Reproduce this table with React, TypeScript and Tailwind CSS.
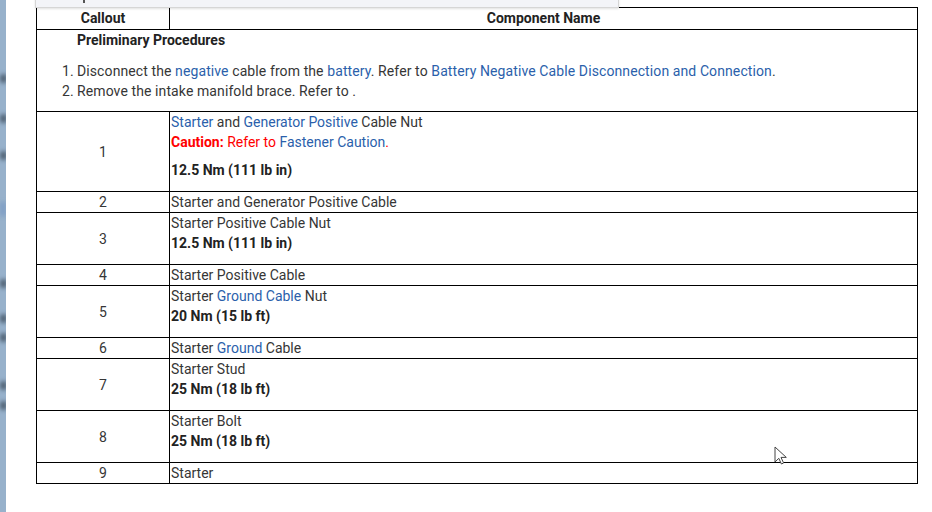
const font = { fontFamily: "Roboto, 'Liberation Sans', sans-serif" }

function Link({ children }: { children: React.ReactNode }) {
  return <span className="text-[#2b5fab]">{children}</span>
}

function Torque({ value }: { value: string }) {
  return <div className="font-bold text-[#222] mb-[11px]">{value}</div>
}

interface Row {
  n: number
  body: React.ReactNode
}

const rows: Row[] = [
  {
    n: 1,
    body: (
      <>
        <div>
          <Link>Starter</Link> and <Link>Generator Positive</Link> Cable Nut
        </div>
        <div className="mb-[8px]">
          <span className="font-bold text-[#ff0000]">Caution:</span>{" "}
          <span className="text-[#ff0000]">Refer to</span> <Link>Fastener Caution</Link>
          <span className="text-[#ff0000]">.</span>
        </div>
        <Torque value="12.5 Nm (111 lb in)" />
      </>
    ),
  },
  { n: 2, body: <div>Starter and Generator Positive Cable</div> },
  {
    n: 3,
    body: (
      <>
        <div>Starter Positive Cable Nut</div>
        <Torque value="12.5 Nm (111 lb in)" />
      </>
    ),
  },
  { n: 4, body: <div>Starter Positive Cable</div> },
  {
    n: 5,
    body: (
      <>
        <div>
          Starter <Link>Ground Cable</Link> Nut
        </div>
        <Torque value="20 Nm (15 lb ft)" />
      </>
    ),
  },
  {
    n: 6,
    body: (
      <div>
        Starter <Link>Ground</Link> Cable
      </div>
    ),
  },
  {
    n: 7,
    body: (
      <>
        <div>Starter Stud</div>
        <Torque value="25 Nm (18 lb ft)" />
      </>
    ),
  },
  {
    n: 8,
    body: (
      <>
        <div>Starter Bolt</div>
        <Torque value="25 Nm (18 lb ft)" />
      </>
    ),
  },
  { n: 9, body: <div>Starter</div> },
]

const spots = [78, 118, 155, 283, 318, 337, 385, 405]

export default function App() {
  return (
    <div
      className="relative w-[932px] h-[512px] overflow-hidden bg-white flex text-[14px] leading-[20px] text-[#363636]"
      style={font}
    >
      {/* blurred window edge on the left */}
      <div className="relative w-[6px] h-full bg-[#97b1cb] shrink-0 overflow-hidden">
        {spots.map((y) => (
          <div
            key={y}
            className="absolute left-0 w-[7px] h-[9px] rounded-full bg-[#4f6173] blur-[2px]"
            style={{ top: y - 4 }}
          />
        ))}
        <div className="absolute left-0 top-[202px] w-[6px] h-[14px] bg-[#7f9fc4] blur-[2px]" />
      </div>

      <div className="pl-[30px] pt-[7px]">
        <div className="w-[882px] border border-black">
          {/* header */}
          <div className="flex border-b border-black font-bold text-[#222]">
            <div className="w-[133px] h-[21px] border-r border-black text-center leading-[21px]">Callout</div>
            <div className="flex-1 text-center leading-[21px]">Component Name</div>
          </div>

          {/* preliminary */}
          <div className="border-b border-black pl-[40px] pb-[10px]">
            <div className="font-bold text-[#222] mb-[11px]">Preliminary Procedures</div>
            <div className="flex tracking-[0.1px]">
              <span className="w-[0px] -ml-[15px] mr-[15px]">1.</span>
              <span>
                Disconnect the <Link>negative</Link> cable from the <Link>battery</Link>. Refer to{" "}
                <Link>Battery Negative Cable Disconnection and Connection</Link>.
              </span>
            </div>
            <div className="flex tracking-[0.1px]">
              <span className="w-[0px] -ml-[15px] mr-[15px]">2.</span>
              <span>Remove the intake manifold brace. Refer to .</span>
            </div>
          </div>

          {rows.map((r, i) => (
            <div key={r.n} className={`flex ${i < rows.length - 1 ? "border-b border-black" : ""}`}>
              <div className="w-[133px] border-r border-black flex items-center justify-center">{r.n}</div>
              <div className="flex-1 pl-[1px]">{r.body}</div>
            </div>
          ))}
        </div>
      </div>

      {/* floating panel cut off at the top */}
      <div className="absolute left-[35px] top-[-20px] w-[584px] h-[28px] bg-[#f3f4f8] border border-[#d6d6d6] shadow-[0_1px_2px_rgba(0,0,0,0.12)]">
        <div className="absolute left-[47px] bottom-[4px] w-[2px] h-[3px] bg-[#555]" />
      </div>

      {/* mouse pointer */}
      <svg className="absolute left-[774px] top-[446px]" width="15" height="21" viewBox="0 0 15 21">
        <path
          d="M1 1 L1 16 L4.8 12.3 L7.4 18 L9.6 17 L7 11.4 L12.3 11.4 Z"
          fill="#fff"
          stroke="#444"
          strokeWidth="1"
          strokeLinejoin="round"
        />
      </svg>
    </div>
  )
}
